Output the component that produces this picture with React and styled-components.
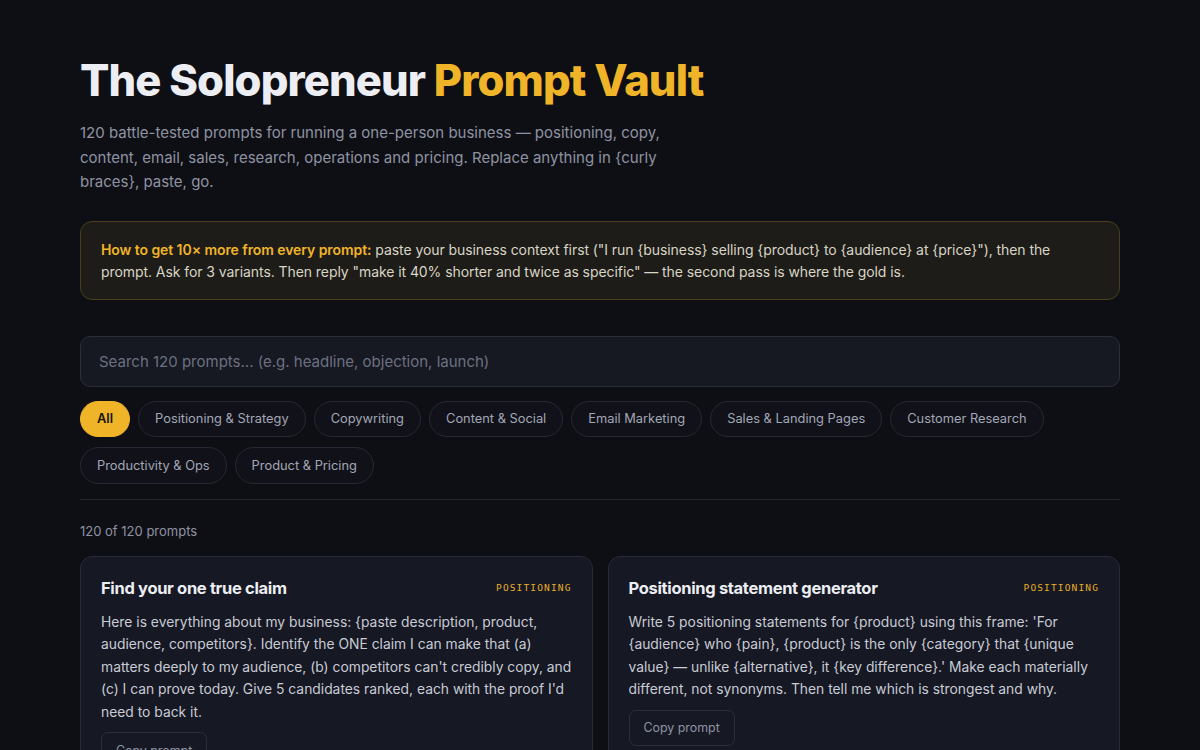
import React, { useState } from 'react';
import styled, { createGlobalStyle } from 'styled-components';

const GlobalStyle = createGlobalStyle`
  * { box-sizing: border-box; }
  body {
    margin: 0;
    background: #0e0f14;
    color: #e6e8ee;
    font-family: Inter, 'Noto Sans', sans-serif;
  }
`;

const categories = [
  'All',
  'Positioning & Strategy',
  'Copywriting',
  'Content & Social',
  'Email Marketing',
  'Sales & Landing Pages',
  'Customer Research',
  'Productivity & Ops',
  'Product & Pricing',
];

const prompts = [
  {
    title: 'Find your one true claim',
    tag: 'Positioning',
    body: "Here is everything about my business: {paste description, product, audience, competitors}. Identify the ONE claim I can make that (a) matters deeply to my audience, (b) competitors can't credibly copy, and (c) I can prove today. Give 5 candidates ranked, each with the proof I'd need to back it.",
  },
  {
    title: 'Positioning statement generator',
    tag: 'Positioning',
    body: "Write 5 positioning statements for {product} using this frame: 'For {audience} who {pain}, {product} is the only {category} that {unique value} — unlike {alternative}, it {key difference}.' Make each materially different, not synonyms. Then tell me which is strongest and why.",
  },
];

export default function App() {
  const [active, setActive] = useState('All');

  return (
    <>
      <GlobalStyle />
      <Page>
        <Title>
          The Solopreneur <Accent>Prompt Vault</Accent>
        </Title>
        <Lead>
          120 battle-tested prompts for running a one-person business — positioning, copy,
          content, email, sales, research, operations and pricing. Replace anything in {'{curly braces}'},
          paste, go.
        </Lead>

        <Tip>
          <strong>How to get 10× more from every prompt:</strong> paste your business context first
          ("I run {'{business}'} selling {'{product}'} to {'{audience}'} at {'{price}'}"), then the
          prompt. Ask for 3 variants. Then reply "make it 40% shorter and twice as specific" — the
          second pass is where the gold is.
        </Tip>

        <Search placeholder="Search 120 prompts... (e.g. headline, objection, launch)" />

        <Chips>
          {categories.map((c) => (
            <Chip key={c} $active={c === active} onClick={() => setActive(c)}>
              {c}
            </Chip>
          ))}
        </Chips>

        <Divider />

        <Count>120 of 120 prompts</Count>

        <Grid>
          {prompts.map((p) => (
            <Card key={p.title}>
              <CardHead>
                <CardTitle>{p.title}</CardTitle>
                <Tag>{p.tag}</Tag>
              </CardHead>
              <CardBody>{p.body}</CardBody>
              <CopyButton>Copy prompt</CopyButton>
            </Card>
          ))}
        </Grid>
      </Page>
    </>
  );
}

const Page = styled.div`
  max-width: 1200px;
  padding: 54px 80px 40px;
  display: flex;
  flex-direction: column;
`;

const Title = styled.h1`
  margin: 0;
  font-family: Inter, 'Noto Sans', sans-serif;
  font-weight: 800;
  font-size: 43.5px;
  line-height: 52px;
  letter-spacing: -0.02em;
  color: #eceef3;
`;

const Accent = styled.span`
  color: #f0b429;
`;

const Lead = styled.p`
  margin: 15px 0 0;
  max-width: 610px;
  font-size: 15px;
  line-height: 24.5px;
  color: #8e93a3;
`;

const Tip = styled.div`
  margin-top: 26px;
  padding: 17px 22px 16px 20px;
  border: 1px solid #4a3e1c;
  border-radius: 12px;
  background: #1d1c18;
  color: #d9d5c6;
  font-size: 14px;
  line-height: 22px;
  letter-spacing: -0.07px;

  strong {
    color: #f0b429;
    font-weight: 600;
  }
`;

const Search = styled.input`
  margin-top: 36px;
  height: 51px;
  padding: 0 18px;
  border: 1px solid #2a2d3a;
  border-radius: 10px;
  background: #161822;
  color: #e6e8ee;
  font-family: inherit;
  font-size: 15px;
  outline: none;

  &::placeholder {
    color: #6c7181;
  }
`;

const Chips = styled.div`
  margin-top: 14px;
  display: flex;
  flex-wrap: wrap;
  gap: 10px 8px;
`;

const Chip = styled.button`
  height: 36.5px;
  padding: 0 16px;
  border-radius: 999px;
  border: 1px solid ${(p) => (p.$active ? '#f0b429' : '#262934')};
  background: ${(p) => (p.$active ? '#f0b429' : '#111219')};
  color: ${(p) => (p.$active ? '#15130d' : '#a2a7b6')};
  font-family: inherit;
  font-size: 12.85px;
  font-weight: ${(p) => (p.$active ? 600 : 400)};
  cursor: pointer;
`;

const Divider = styled.hr`
  margin: 15px 0 0;
  border: 0;
  border-top: 1px solid #22252f;
`;

const Count = styled.div`
  margin-top: 22px;
  font-size: 13px;
  line-height: 18px;
  color: #8e93a3;
`;

const Grid = styled.div`
  margin-top: 16px;
  display: grid;
  grid-template-columns: 1fr 1fr;
  gap: 15px;
`;

const Card = styled.div`
  padding: 19px 20px 18px;
  border: 1px solid #272a36;
  border-radius: 12px;
  background: #161823;
  display: flex;
  flex-direction: column;
  align-items: flex-start;
`;

const CardHead = styled.div`
  width: 100%;
  display: flex;
  justify-content: space-between;
  align-items: center;
  gap: 12px;
`;

const CardTitle = styled.h3`
  margin: 0;
  font-family: Inter, 'Noto Sans', sans-serif;
  font-weight: 700;
  font-size: 16.5px;
  line-height: 24px;
  letter-spacing: -0.02em;
  color: #eceef3;
`;

const Tag = styled.span`
  font-family: 'DejaVu Sans Mono', 'Liberation Mono', monospace;
  font-size: 9.5px;
  letter-spacing: 0.12em;
  text-transform: uppercase;
  color: #e8ae2a;
`;

const CardBody = styled.p`
  margin: 11px 0 0;
  font-size: 13.85px;
  line-height: 22.5px;
  color: #c8cbd5;
`;

const CopyButton = styled.button`
  margin-top: 9px;
  height: 36px;
  padding: 0 14px;
  border: 1px solid #2c2f3b;
  border-radius: 7px;
  background: transparent;
  color: #8e93a3;
  font-family: inherit;
  font-size: 12.4px;
  cursor: pointer;
`;
